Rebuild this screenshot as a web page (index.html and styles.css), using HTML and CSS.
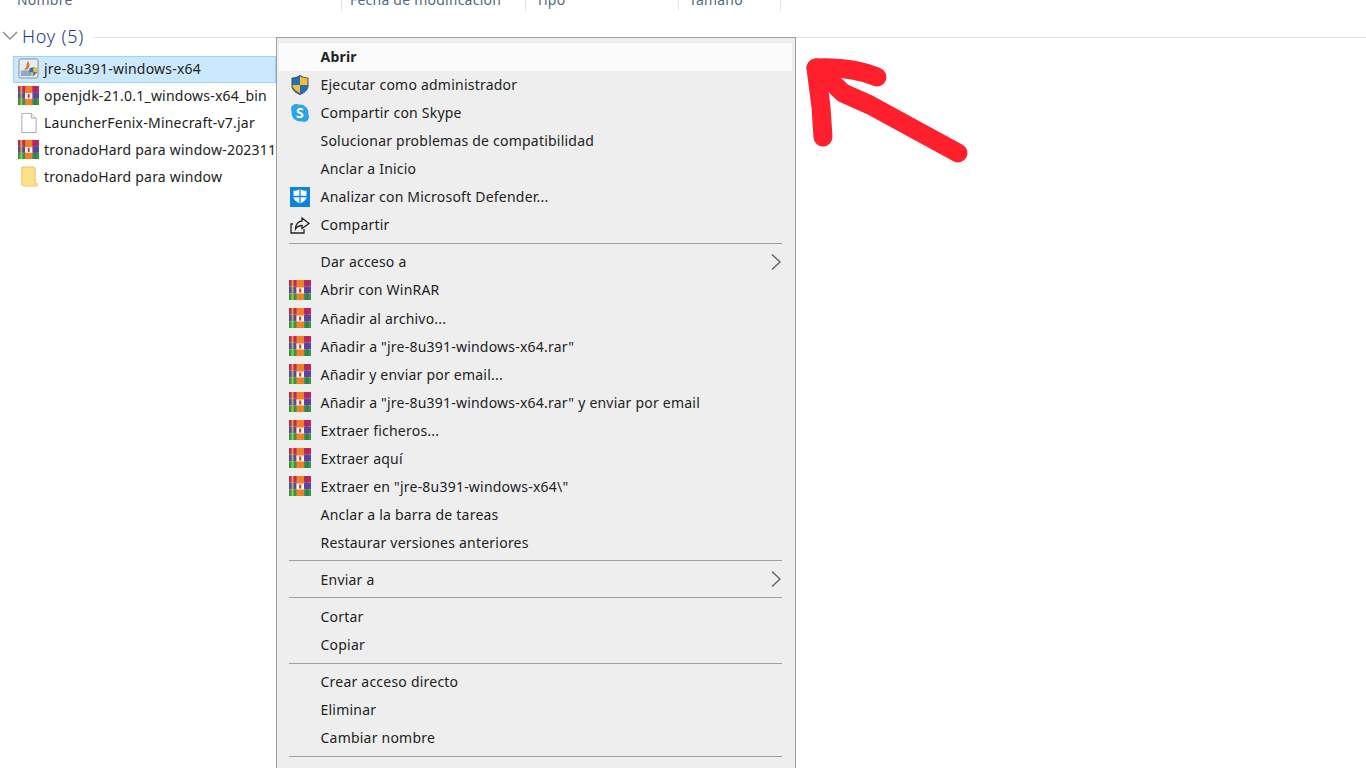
FILE: index.html
```html
<html>
<head>
<meta charset="UTF-8">
<link rel="stylesheet" href="styles.css">
</head>
<body>
<svg class="defs" width="0" height="0">
<symbol id="rar" viewBox="0 0 22 22">
<rect x="0" y="1" width="22" height="6.500" fill="#c0265a"/>
<rect x="0" y="7.500" width="22" height="7" fill="#4f4aa8"/>
<rect x="0" y="14.500" width="22" height="6.500" fill="#2c9a44"/>
<rect x="2.500" y="1" width="2" height="20" fill="#e0c63c" opacity=".8"/>
<rect x="7.500" y="1" width="7.500" height="20" fill="#f0802a"/>
<rect x="17" y="1" width="2" height="20" fill="#8a2a70" opacity=".5"/>
<rect x="7.500" y="8.500" width="7.500" height="6" fill="#f8f2ec"/>
<rect x="10.200" y="9.500" width="2" height="4" fill="#c8352b"/>
</symbol>
</svg>
<div class="header">
<div class="col col-name">Nombre</div>
<div class="col col-date">Fecha de modificación</div>
<div class="col col-type">Tipo</div>
<div class="col col-size">Tamaño</div>
</div>
<div class="group">
<svg class="chevron" width="16" height="10" viewBox="0 0 16 10"><path d="M1 1l7 7 7-7" fill="none" stroke="#8a8a8a" stroke-width="1.300"/></svg>
<span class="group-title">Hoy (5)</span>
<span class="group-line"></span>
</div>
<div class="files">
<div class="file selected">
<svg class="file-icon" width="21" height="21" viewBox="0 0 22 22"><rect x="1" y="1" width="20" height="20" rx="2" fill="#e8edf2" stroke="#7f8c99"/><path d="M3 13h11v6H3z" fill="#8fa9c6"/><path d="M6 12c5-2 1-5 5-9 0 3 3 5-1 9z" fill="#e0762a"/><path d="M12 11l4-1.500 4 1.500v4l-4 4-4-4z" fill="#2f6db5"/><path d="M16 9.500l4 1.500v4h-4zM12 15h4v4l-4-4z" fill="#f2c22e"/></svg>
<span>jre-8u391-windows-x64</span>
</div>
<div class="file">
<svg class="file-icon" width="21" height="21"><use href="#rar"/></svg>
<span>openjdk-21.0.1_windows-x64_bin</span>
</div>
<div class="file">
<svg class="file-icon" width="21" height="21" viewBox="0 0 22 22"><path d="M4 1.500h10l5 5v15H4z" fill="#fff" stroke="#a8a8a8"/><path d="M14 1.500v5h5" fill="#f0f0f0" stroke="#a8a8a8"/></svg>
<span>LauncherFenix-Minecraft-v7.jar</span>
</div>
<div class="file">
<svg class="file-icon" width="21" height="21"><use href="#rar"/></svg>
<span>tronadoHard para window-20231123</span>
</div>
<div class="file">
<svg class="file-icon" width="21" height="21" viewBox="0 0 22 22"><path d="M4 1h13l1 1v16h2v3H6l-2-1z" fill="#fbe08c" stroke="#ecc55a"/></svg>
<span>tronadoHard para window</span>
</div>
</div>

<div class="menu">
<div class="item first"><span class="label strong">Abrir</span></div>
<div class="item">
<svg class="icon" width="22" height="22" viewBox="0 0 22 22"><path d="M11 1.500c3 2 5.500 2.500 8 2.500v8c0 4-4 7-8 8.500-4-1.500-8-4.500-8-8.500V4c2.500 0 5-.5 8-2.500z" fill="#1f6fc0" stroke="#4a4a4a"/><path d="M11 2.500V11h7.500V4.500c-3-.3-5-1-7.500-2zM11 11H3.500c.3 3.500 4 6.500 7.500 8z" fill="#f7bd2c"/></svg>
<span class="label">Ejecutar como administrador</span>
</div>
<div class="item">
<svg class="icon" width="22" height="22" viewBox="0 0 22 22"><circle cx="11" cy="11" r="8.500" fill="#2aa5e8"/><circle cx="7" cy="7" r="5" fill="#2aa5e8"/><circle cx="15" cy="15" r="5" fill="#2aa5e8"/><text x="11" y="16" class="skype">S</text></svg>
<span class="label">Compartir con Skype</span>
</div>
<div class="item"><span class="label">Solucionar problemas de compatibilidad</span></div>
<div class="item"><span class="label">Anclar a Inicio</span></div>
<div class="item">
<svg class="icon" width="22" height="22" viewBox="0 0 22 22"><rect x="1" y="1" width="20" height="20" fill="#0a84e0"/><path d="M11 3c2 1.300 4 1.800 6.500 1.800v6c0 3.200-3.300 5.400-6.500 6.700-3.200-1.300-6.500-3.500-6.500-6.700v-6C7 4.800 9 4.300 11 3z" fill="#fff"/><path d="M11 3v15M4 10.500h14" stroke="#0a84e0" stroke-width="1.300"/></svg>
<span class="label">Analizar con Microsoft Defender...</span>
</div>
<div class="item">
<svg class="icon" width="22" height="22" viewBox="0 0 22 22"><path d="M4 10H2v9h13v-4" fill="none" stroke="#222" stroke-width="1.300"/><path d="M13 4l7 5.500-7 5v-3c-3 0-5 1-6.500 3.500 0-4.500 2.500-8 6.500-8z" fill="none" stroke="#222" stroke-width="1.300"/></svg>
<span class="label">Compartir</span>
</div>
<div class="sep"></div>
<div class="item"><span class="label">Dar acceso a</span><svg class="arrow" width="12" height="18" viewBox="0 0 12 18"><path d="M2 1.500L10 9l-8 7.500" fill="none" stroke="#5d6470" stroke-width="1.400"/></svg></div>
<div class="item"><svg class="icon" width="22" height="22"><use href="#rar"/></svg><span class="label">Abrir con WinRAR</span></div>
<div class="item"><svg class="icon" width="22" height="22"><use href="#rar"/></svg><span class="label">Añadir al archivo...</span></div>
<div class="item"><svg class="icon" width="22" height="22"><use href="#rar"/></svg><span class="label">Añadir a "jre-8u391-windows-x64.rar"</span></div>
<div class="item"><svg class="icon" width="22" height="22"><use href="#rar"/></svg><span class="label">Añadir y enviar por email...</span></div>
<div class="item"><svg class="icon" width="22" height="22"><use href="#rar"/></svg><span class="label">Añadir a "jre-8u391-windows-x64.rar" y enviar por email</span></div>
<div class="item"><svg class="icon" width="22" height="22"><use href="#rar"/></svg><span class="label">Extraer ficheros...</span></div>
<div class="item"><svg class="icon" width="22" height="22"><use href="#rar"/></svg><span class="label">Extraer aquí</span></div>
<div class="item"><svg class="icon" width="22" height="22"><use href="#rar"/></svg><span class="label">Extraer en "jre-8u391-windows-x64\"</span></div>
<div class="item"><span class="label">Anclar a la barra de tareas</span></div>
<div class="item"><span class="label">Restaurar versiones anteriores</span></div>
<div class="sep"></div>
<div class="item"><span class="label">Enviar a</span><svg class="arrow" width="12" height="18" viewBox="0 0 12 18"><path d="M2 1.500L10 9l-8 7.500" fill="none" stroke="#5d6470" stroke-width="1.400"/></svg></div>
<div class="sep"></div>
<div class="item"><span class="label">Cortar</span></div>
<div class="item"><span class="label">Copiar</span></div>
<div class="sep"></div>
<div class="item"><span class="label">Crear acceso directo</span></div>
<div class="item"><span class="label">Eliminar</span></div>
<div class="item"><span class="label">Cambiar nombre</span></div>
<div class="sep"></div>
</div>

<svg class="scribble" width="200" height="130" viewBox="0 0 200 130"><g fill="none" stroke="#ff1f2d" stroke-width="19" stroke-linecap="round" stroke-linejoin="round"><path d="M178 103L90 55 63 43 37 18"/><path d="M36 18C55 17 78 19 97 27"/><path d="M36 18L41 57 43 87"/></g></svg>
</body>
</html>
```

FILE: styles.css
```css
*{
margin:0;
padding:0;
box-sizing:border-box;
}
html,body{
height:768px;
overflow:hidden;
background:#fff;
}
body{
font-family:"Noto Sans","Open Sans",sans-serif;
font-size:14px;
letter-spacing:.22px;
color:#222;
}
.defs{position:absolute;}
.header{
display:flex;
height:11px;
color:#56677d;
overflow:hidden;
}
.col{
height:11px;
line-height:0;
border-right:1px solid #e5e5e5;
padding-left:8px;
}
.col-name{width:342px;padding-left:17px;}
.col-date{width:184px;}
.col-type{width:153px;padding-left:10px;}
.col-size{width:102px;padding-left:10px;}
.group{
display:flex;
align-items:center;
height:26px;
margin-top:12px;
padding-left:2px;
}
.chevron{flex:none;}
.group-title{
margin-left:4px;
font-size:18px;
font-weight:300;
letter-spacing:.75px;
color:#24368c;
white-space:nowrap;
}
.group-line{
flex:1;
height:1px;
margin:2px 0 0 9px;
background:#e5e5e5;
}
.files{
margin:7px 0 0 13px;
width:263px;
overflow:hidden;
}
.file{
display:flex;
align-items:center;
height:27px;
padding:0 0 2px 4px;
gap:5px;
white-space:nowrap;
border:1px solid transparent;
}
.file.selected{
background:#cce8ff;
border-color:#99d1ff;
}
.file-icon{flex:none;}
.menu{
position:absolute;
left:276px;
top:37px;
width:520px;
height:740px;
padding:4.600px 3px 0 2px;
background:#eee;
border:1.500px solid #a0a0a0;
}
.item{
display:flex;
align-items:center;
height:28.050px;
padding-left:10px;
padding-right:10px;
white-space:nowrap;
}
.item.first{background:#fbfbfb;}
.icon{flex:none;}
.label{
position:absolute;
left:43.500px;
}
.strong{font-weight:700;}
.arrow{
margin-left:auto;
flex:none;
}
.sep{
height:1px;
margin:4px 10px 4px 10px;
background:#a0a0a0;
}
.skype{
font-family:"Noto Sans",sans-serif;
font-size:14px;
font-weight:700;
fill:#fff;
text-anchor:middle;
}
.scribble{
position:absolute;
left:780px;
top:50px;
}
```
